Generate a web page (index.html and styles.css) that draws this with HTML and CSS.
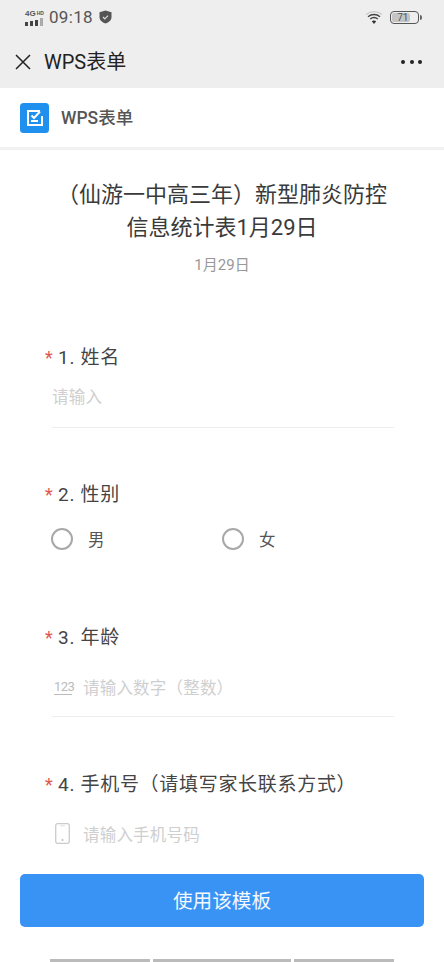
FILE: index.html
```html
<!DOCTYPE html>
<html lang="zh">
<head>
<meta charset="utf-8">
<title>WPS表单</title>
<link rel="stylesheet" href="styles.css">
</head>
<body>
<div class="app">
  <div class="top">
    <div class="status">
      <div class="status-left">
        <div class="signal">
          <div class="net">4G<span class="hd">HD</span></div>
          <div class="bars"><i class="b1"></i><i class="b2"></i><i class="b3"></i><i class="b4"></i></div>
        </div>
        <span class="time">09:18</span>
        <svg class="shield" width="13" height="14" viewBox="0 0 13 14"><path d="M6.5.5 12.5 2.300v4.700c0 3.300-2.600 5.500-6 6.500-3.400-1-6-3.200-6-6.500V2.300z" fill="#555"/><path d="M4 7l1.800 1.800L9 5.600" fill="none" stroke="#ddd" stroke-width="1.200"/></svg>
      </div>
      <div class="status-right">
        <svg width="18" height="15" viewBox="0 0 18 15"><path d="M1 4.500C5.500.6 12.500.6 17 4.500" fill="none" stroke="#ccc" stroke-width="1.200"/><path d="M3 6.800C6.500 3.800 11.500 3.800 15 6.800" fill="none" stroke="#444" stroke-width="1.400"/><path d="M5.200 9C7.400 7.200 10.600 7.200 12.800 9" fill="none" stroke="#444" stroke-width="1.400"/><path d="M9 14 6.800 11.200C8 10.300 10 10.300 11.200 11.200z" fill="#333"/></svg>
        <div class="battery"><div class="level"><span class="level-num">71</span></div></div>
      </div>
    </div>
    <div class="nav">
      <svg class="close" width="16" height="16" viewBox="0 0 16 16"><path d="M1 1l14 14M15 1 1 15" stroke="#222" stroke-width="1.500" fill="none"/></svg>
      <span class="nav-title">WPS表单</span>
      <div class="more"><i></i><i></i><i></i></div>
    </div>
  </div>
  <header class="brand">
    <svg class="logo" width="29" height="30" viewBox="0 0 29 30"><rect width="29" height="30" rx="3.500" fill="#2090ee"/><path d="M20 8H8v14h14v-9" fill="none" stroke="#fff" stroke-width="2"/><path d="M11 18h7" stroke="#fff" stroke-width="2"/><path d="M11.500 12.500l2.500 2.500 6-6.500" fill="none" stroke="#fff" stroke-width="2"/></svg>
    <span class="brand-name">WPS表单</span>
  </header>
  <main class="form">
    <h1 class="title">（仙游一中高三年）新型肺炎防控<br>信息统计表1月29日</h1>
    <div class="date">1月29日</div>

    <section class="q q1">
      <div class="label"><span class="star">*</span>1. 姓名</div>
      <div class="input"><span class="ph">请输入</span></div>
    </section>

    <section class="q q2">
      <div class="label"><span class="star">*</span>2. 性别</div>
      <div class="radios">
        <div class="radio"><i class="dot"></i><span>男</span></div>
        <div class="radio"><i class="dot"></i><span>女</span></div>
      </div>
    </section>

    <section class="q q3">
      <div class="label"><span class="star">*</span>3. 年龄</div>
      <div class="input input-icon"><span class="num">123</span><span class="ph">请输入数字（整数）</span></div>
    </section>

    <section class="q q4">
      <div class="label"><span class="star">*</span>4. 手机号（请填写家长联系方式）</div>
      <div class="input input-icon plain">
        <svg class="phone" width="15" height="21" viewBox="0 0 15 21"><rect x=".7" y=".7" width="13.600" height="19.600" rx="2" fill="none" stroke="#ccc" stroke-width="1.300"/><path d="M5 2.800h5" stroke="#ddd"/><circle cx="7.500" cy="17" r="1" fill="#bbb"/></svg>
        <span class="ph">请输入手机号码</span>
      </div>
    </section>
  </main>
  <footer class="foot">
    <div class="use">使用该模板</div>
    <div class="strip"><i class="s1"></i><i class="s2"></i><i class="s3"></i></div>
  </footer>
</div>
</body>
</html>
```

FILE: styles.css
```css
* { box-sizing: border-box; }
html, body { margin: 0; padding: 0; background: #fff; }
body { font-family: Roboto, "Noto Sans CJK SC", "Noto Sans", sans-serif; }
i { display: block; }
.app { width: 444px; height: 962px; display: flex; flex-direction: column; overflow: hidden; }
.top { background: #eeeeee; height: 88px; flex: none; }
.status { height: 41px; display: flex; justify-content: space-between; align-items: center; padding: 0 25px 7px 25px; }
.status-left { display: flex; align-items: center; }
.status-right { display: flex; align-items: center; gap: 7px; padding-top: 1px; }
.signal { width: 19px; margin-right: 5px; }
.net { font: bold 8px/8px "Liberation Sans", sans-serif; color: #555; white-space: nowrap; }
.hd { font-size: 5px; margin-left: 1px; vertical-align: 1px; }
.bars { display: flex; gap: 2px; align-items: flex-end; margin-top: 0; height: 8px; }
.bars i { width: 3px; background: #444; }
.b1 { height: 4px; } .b2 { height: 5px; } .b3 { height: 6px; }
.bars .b4 { height: 8px; background: #aaa; }
.time { font: 17px/20px Roboto, sans-serif; color: #555; letter-spacing: .3px; margin-right: 6px; }
.battery { width: 29px; height: 13px; border: 1.200px solid #555; border-radius: 4px; padding: 1px; position: relative; }
.battery::after { content: ""; position: absolute; right: -4px; top: 3px; width: 2px; height: 5px; background: #666; border-radius: 0 2px 2px 0; }
.level { width: 71%; height: 100%; background: #c4c4c4; border-radius: 2px; font: 10px/9px Roboto, sans-serif; color: #555; }
.level-num { display: block; text-align: center; padding-left: 4px; }
.nav { height: 41px; display: flex; align-items: center; padding: 0 22px 0 15px; }
.close { margin-right: 13px; }
.nav-title { font-size: 20px; color: #222; flex: 1; line-height: 28px; }
.more { display: flex; gap: 4.500px; }
.more i { width: 4px; height: 4px; border-radius: 50%; background: #222; }
.brand { flex: none; height: 62px; display: flex; align-items: center; padding: 0 20px 3px; background: #fff; border-bottom: 3px solid #f1f1f1; }
.logo { margin: 4px 12px 0 0; }
.brand-name { font-size: 17.500px; color: #555; font-weight: 500; }
.form { flex: 1; min-height: 0; overflow: hidden; padding: 0 50px 0 45px; }
.title { margin: 28px -20px 0 -15px; font-size: 22px; line-height: 33px; font-weight: 400; color: #3a3a3a; text-align: center; }
.date { text-align: center; font-size: 15px; line-height: 20px; color: #999; margin: 11px 0 0 5px; }
.q { display: block; }
.label { font-size: 19px; line-height: 26px; color: #444; display: flex; white-space: pre; letter-spacing: .7px; }
.star { color: #e2574c; font-size: 18px; width: 13px; flex: none; }
.input { margin-left: 7px; height: 60px; border-bottom: 1px solid #eee; display: flex; align-items: center; padding-bottom: 1px; margin-top: 0; }
.ph { font-size: 16.500px; letter-spacing: .2px; color: #cfcfcf; }
.q1 { margin-top: 70px; }
.q1 .input { height: 56px; padding-bottom: 8px; margin-top: 1px; }
.q2 { margin-top: 55px; }
.q2 .label { margin-top: -1px; }
.radios { display: flex; margin-top: 19px; }
.radio { width: 171px; display: flex; align-items: center; font-size: 16.500px; color: #555; margin-left: 6px; margin-right: -6px; }
.dot { width: 22px; height: 22px; border: 2px solid #a8a8a8; border-radius: 50%; margin-right: 15px; }
.q3 { margin-top: 74px; }
.q3 .input { height: 65px; margin-top: 1px; padding-top: 6px; padding-bottom: 0; }
.num { font: 13px/14px Roboto, sans-serif; color: #bbb; border-bottom: 1px solid #bbb; margin: 0 11px 0 2px; width: 18px; letter-spacing: -.5px; }
.q4 { margin-top: 55px; }
.plain { border-bottom: 0; height: 64px; margin-top: 4px; }
.phone { margin: 0 13px 0 3px; }
.foot { flex: none; height: 88px; padding: 0; background: #fff; display: flex; flex-direction: column; }
.use { margin: 0 20px; height: 53px; border-radius: 5px; background: #3893f5; color: #f4f9ff; font-size: 19.600px; padding-bottom: 2px; display: flex; align-items: center; justify-content: center; }
.strip { margin-top: auto; display: flex; gap: 3px; padding-left: 50px; }
.strip i { height: 3px; background: #bbb; }
.s1 { width: 100px; } .s2 { width: 138px; } .s3 { width: 100px; }
```
